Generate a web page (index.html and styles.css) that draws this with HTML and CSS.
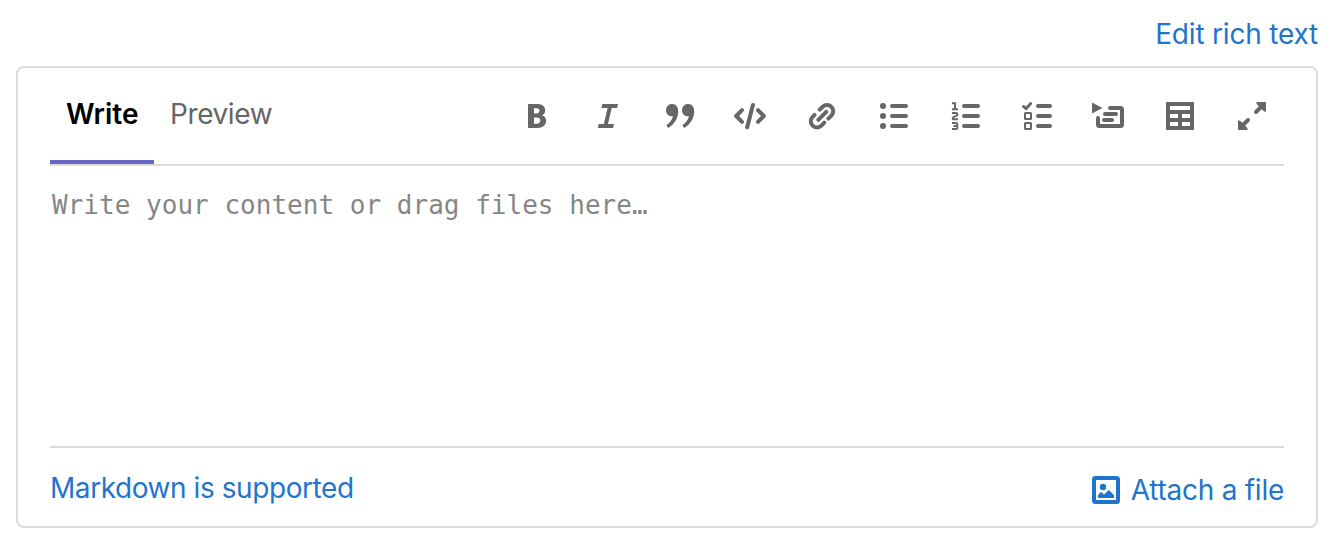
FILE: index.html
```html
<!DOCTYPE html>
<html lang="en">
<head>
<meta charset="utf-8">
<title>Markdown editor</title>
<link rel="stylesheet" href="styles.css">
</head>
<body>
<div class="mode-row"><a class="link edit-link">Edit rich text</a></div>
<section class="editor">
  <header class="editor-header">
    <nav class="tabs">
      <a class="tab tab-active"><span class="label-write">Write</span></a>
      <a class="tab"><span class="label-preview">Preview</span></a>
    </nav>
    <div class="toolbar">
      <div class="tool-group">
        <svg class="icon" viewBox="0 0 32 32"><path fill-rule="evenodd" d="M8 4h9.2c5 0 8 2.4 8 6.2 0 2.5-1.2 4.2-3.2 5.1 2.6.7 4.1 2.7 4.1 5.5 0 4.5-3.4 7.2-8.600 7.200H8zM14 8.300v5.100h2.200c2.200 0 3.300-.9 3.300-2.600s-1.100-2.500-3.300-2.500zM14 17.600v6.100h2.600c2.400 0 3.700-1 3.700-3.100s-1.300-3-3.700-3z"/></svg>
        <svg class="icon" viewBox="0 0 32 32"><path d="M10.300 4H26l-.9 4h-5.400l-3.700 16H22l-.9 4H5.800l.9-4h5.200l3.700-16H9.400z"/></svg>
        <svg class="icon" viewBox="0 0 32 32"><path id="quote" d="M8 4c3.800 0 6.200 2.800 6.200 7.300 0 7.200-4 13.200-10 16.700L2.400 25.200c3.600-2.400 5.800-5.200 6.500-9.100C5 17 2 14 2 10.200 2 6.600 4.600 4 8 4z"/><use href="#quote" x="16"/></svg>
      </div>
      <div class="tool-group">
        <svg class="icon line" viewBox="0 0 32 32"><path d="M8 10.200L2.200 16 8 21.800M24 10.200l5.800 5.800-5.800 5.800M18.900 5l-5.700 22.300"/></svg>
        <svg class="icon line" viewBox="0 0 32 32"><path d="M13.700 9.700l2.900-2.900a6.200 6.200 0 0 1 8.800 8.800l-3.100 3.100M18.300 22.700l-2.900 2.900a6.200 6.200 0 0 1-8.800-8.800l2-2M12.300 19.900l8-8"/></svg>
        <svg class="icon line" viewBox="0 0 32 32"><path d="M14 6h14M14 16h14M14 26h14"/><g class="solid"><circle cx="5" cy="6" r="3"/><circle cx="5" cy="16" r="3"/><circle cx="5" cy="26" r="3"/></g></svg>
        <svg class="icon line" viewBox="0 0 32 32"><path d="M14 6h14M14 16h14M14 26h14"/><path class="numeral" d="M2 3.200h3v5.900M1.900 9.200H8M2 12.900h4.200q1.200 0 1.200 1.300t-1.200 1.700l-2.400 1q-1 .5-1 2.300H8M2 22.900h4.200q1.200 0 1.200 1.500T6.200 26H3.500M6.200 26q1.200 0 1.200 1.500t-1.200 1.600H2"/></svg>
        <svg class="icon line" viewBox="0 0 32 32"><path d="M16 6h12M16 16h12M16 26h12"/><path class="tick" d="M1.500 6.400l2.500 2.300 4.700-5.200"/><rect class="box" x="3" y="13" width="6" height="6" rx=".6"/><rect class="box" x="3" y="23" width="6" height="6" rx=".6"/></svg>
      </div>
      <div class="tool-group">
        <svg class="icon line" viewBox="0 0 32 32"><path d="M18 8h10.500A1.500 1.500 0 0 1 30 9.500v15a1.500 1.500 0 0 1-1.500 1.500h-21A1.500 1.500 0 0 1 6 24.500V18M13 14h11M12 20h8"/><path class="solid" d="M0 2.600l10.500 5.400L0 13.400z"/></svg>
        <svg class="icon" viewBox="0 0 32 32"><path fill-rule="evenodd" d="M2 2h28v28H2zM6 6v4h20V6zM6 14v4h8v-4zM18 14v4h8v-4zM6 22v4h8v-4zM18 22v4h8v-4z"/></svg>
        <svg class="icon line" viewBox="0 0 32 32"><path d="M20 12l6-6M12 20l-6 6"/><path class="solid" d="M20.500 2H30v9.500q-2 .5-3-1L21.500 5q-1.500-1-1-3zM11.500 30H2v-9.500q2-.5 3 1l5.500 5.500q1.500 1 1 3z"/></svg>
      </div>
    </div>
  </header>
  <div class="content">Write your content or drag files here…</div>
  <footer class="editor-footer">
    <a class="link help-link">Markdown is supported</a>
    <a class="link attach"><svg class="image-icon" viewBox="0 0 28 28"><rect x="2" y="2" width="24" height="24" rx="1.500"/><circle class="solid" cx="11" cy="11" r="3.200"/><path class="solid" d="M6 22v-2.800l3-3.400 3 2.700 5-4.500 5 5.200V22z"/></svg><span class="attach-label">Attach a file</span></a>
  </footer>
</section>
</body>
</html>
```
FILE: styles.css
```css
* { box-sizing: border-box; }

body {
  margin: 0;
  height: 546px;
  overflow: hidden;
  background: #fff;
  font: 28px/40px Inter, sans-serif;
  color: #666;
}

.mode-row {
  display: flex;
  justify-content: flex-end;
  height: 66px;
  padding: 14px 12px 0 0;
}

.link { color: #1f75cb; white-space: nowrap; }

.editor {
  width: 1302px;
  height: 462px;
  margin-left: 16px;
  padding: 0 32px;
  border: 2px solid #dbdbdb;
  border-radius: 8px;
}

.editor-header {
  display: flex;
  justify-content: space-between;
  height: 98px;
  border-bottom: 2px solid #dbdbdb;
}

.tabs { display: flex; height: 96px; }

.tab { padding: 26px 16px 0; white-space: nowrap; }

.tab-active {
  width: 104px;
  border-bottom: 4px solid #6666c4;
  color: #000;
  font-weight: 600;
}

.toolbar { display: flex; gap: 38px; padding: 32px 16px 0 0; }
.tool-group { display: flex; gap: 40px; }

.icon { display: block; width: 32px; height: 32px; fill: #666; }
.line { fill: none; stroke: #666; stroke-width: 4; stroke-linecap: round; stroke-linejoin: round; }
.line .solid { fill: #666; stroke: none; }
.line .numeral { stroke-width: 2; stroke-linecap: butt; stroke-linejoin: miter; }
.line .tick { stroke-width: 2.8; }
.line .box { stroke-width: 2; }

.content {
  height: 280px;
  padding: 19px 0 0 2px;
  font-family: "DejaVu Sans Mono", monospace;
  font-size: 26px;
  letter-spacing: 0.02px;
  color: #868686;
  white-space: nowrap;
}

.editor-footer {
  display: flex;
  justify-content: space-between;
  height: 80px;
  border-top: 2px solid #dbdbdb;
}

.help-link { padding-top: 20px; letter-spacing: -0.43px; }
.attach { display: flex; gap: 11px; padding-top: 22px; }
.image-icon { width: 28px; height: 28px; margin-top: 6px; fill: none; stroke: #1f75cb; stroke-width: 4; }
.image-icon .solid { fill: #1f75cb; stroke: none; }

.label-write { letter-spacing: 0; }
.label-preview { letter-spacing: -0.4px; }
.edit-link { letter-spacing: -0.2px; }
.attach-label { letter-spacing: -0.25px; }
```
